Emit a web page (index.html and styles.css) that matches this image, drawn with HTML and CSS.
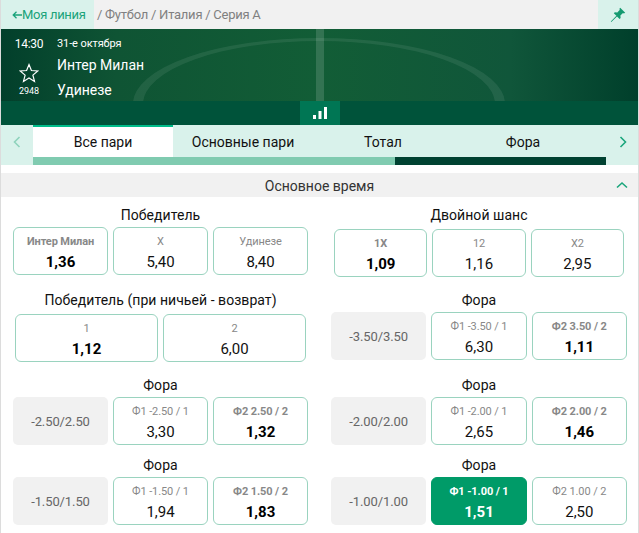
FILE: index.html
```html
<!DOCTYPE html>
<html lang="ru">
<head>
<meta charset="utf-8">
<title>Интер Милан - Удинезе</title>
<link rel="stylesheet" href="styles.css">
</head>
<body>
<div class="page">
  <header class="topbar">
    <a class="back"><svg class="back-arrow" width="10" height="8" viewBox="0 0 10 8"><path d="M10 4H1.500M4.500 .8 1.200 4l3.300 3.200" fill="none" stroke="#1aa37a" stroke-width="1.300"/></svg>Моя линия</a>
    <div class="crumbs">/ Футбол / Италия / Серия А</div>
    <button class="pin" aria-label="Закрепить">
      <svg width="16" height="16" viewBox="0 0 16 16"><path d="M10.2 0.8 15.2 5.8 13.9 6.6 13 5.9 10.4 8.5 10.6 11 9.6 12 7 9.4 1.3 15 0.8 14.6 6.4 8.8 3.8 6.2 4.8 5.2 7.3 5.4 9.9 2.8 9.3 2z" fill="#159a70"/></svg>
    </button>
  </header>

  <section class="banner">
    <svg class="field" width="637" height="72" viewBox="0 0 637 72">
      <path d="M132 75A186 66 0 0 1 504 75H494A176 63 0 0 0 142 75Z" fill="#fff" fill-opacity=".08"/>
      <rect x="315" y="0" width="8" height="72" fill="#fff" fill-opacity=".14"/>
    </svg>
    <div class="fav">
      <div class="time">14:30</div>
      <svg class="star" width="20" height="20" viewBox="0 0 20 20"><path d="M10 1.6 12.4 7.5 18.8 8 13.9 12.1 15.5 18.4 10 15 4.5 18.4 6.1 12.1 1.200 8 7.600 7.500Z" fill="none" stroke="#fff" stroke-width="1.200"/></svg>
      <div class="count">2948</div>
    </div>
    <div class="match">
      <div class="date">31-е октября</div>
      <div class="team">Интер Милан</div>
      <div class="team">Удинезе</div>
    </div>
  </section>

  <div class="statbar">
    <div class="stat-btn">
      <svg width="16" height="16" viewBox="0 0 16 16"><rect x="1" y="10" width="3" height="4" fill="#fff"/><rect x="6.500" y="6" width="3" height="8" fill="#fff"/><rect x="12" y="2" width="3" height="12" fill="#fff"/></svg>
    </div>
  </div>

  <nav class="tabs">
    <div class="tab-arrow tab-arrow-left">
      <svg width="8" height="12" viewBox="0 0 8 12"><path d="M6.500 1 1.500 6l5 5" fill="none" stroke="#8fd3bc" stroke-width="1.600"/></svg>
    </div>
    <div class="tab-main">
      <div class="tab-row">
        <div class="tab tab-active">Все пари</div>
        <div class="tab">Основные пари</div>
        <div class="tab">Тотал</div>
        <div class="tab">Фора</div>
      </div>
      <div class="tab-progress"><div class="tab-progress-fill"></div></div>
    </div>
    <div class="tab-arrow tab-arrow-right">
      <svg width="8" height="12" viewBox="0 0 8 12"><path d="M1.500 1l5 5-5 5" fill="none" stroke="#1ba67c" stroke-width="1.600"/></svg>
    </div>
  </nav>

  <div class="section-head">
    <span>Основное время</span>
    <svg class="section-chevron" width="12" height="8" viewBox="0 0 12 8"><path d="M1 6.500 6 2l5 4.500" fill="none" stroke="#1ba67c" stroke-width="1.600"/></svg>
  </div>

  <main class="markets">
    <section class="market market-l market-spaced">
      <h3 class="market-title">Победитель</h3>
      <div class="odds">
        <div class="odd"><span class="odd-label odd-bold">Интер Милан</span><span class="odd-val odd-bold-val">1,36</span></div>
        <div class="odd"><span class="odd-label">X</span><span class="odd-val">5,40</span></div>
        <div class="odd"><span class="odd-label">Удинезе</span><span class="odd-val">8,40</span></div>
      </div>
    </section>
    <section class="market market-r-narrow market-spaced">
      <h3 class="market-title market-title-tall">Двойной шанс</h3>
      <div class="odds">
        <div class="odd"><span class="odd-label odd-bold">1X</span><span class="odd-val odd-bold-val">1,09</span></div>
        <div class="odd"><span class="odd-label">12</span><span class="odd-val">1,16</span></div>
        <div class="odd"><span class="odd-label">X2</span><span class="odd-val">2,95</span></div>
      </div>
    </section>

    <section class="market market-l-narrow market-spaced">
      <h3 class="market-title market-title-mid">Победитель (при ничьей - возврат)</h3>
      <div class="odds odds-wide">
        <div class="odd"><span class="odd-label">1</span><span class="odd-val odd-bold-val">1,12</span></div>
        <div class="odd"><span class="odd-label">2</span><span class="odd-val">6,00</span></div>
      </div>
    </section>
    <section class="market market-r market-spaced">
      <h3 class="market-title">Фора</h3>
      <div class="odds">
        <div class="line">-3.50/3.50</div>
        <div class="odd"><span class="odd-label">Ф1 -3.50 / 1</span><span class="odd-val">6,30</span></div>
        <div class="odd"><span class="odd-label odd-bold">Ф2 3.50 / 2</span><span class="odd-val odd-bold-val">1,11</span></div>
      </div>
    </section>

    <section class="market market-l">
      <h3 class="market-title">Фора</h3>
      <div class="odds">
        <div class="line">-2.50/2.50</div>
        <div class="odd"><span class="odd-label">Ф1 -2.50 / 1</span><span class="odd-val">3,30</span></div>
        <div class="odd"><span class="odd-label odd-bold">Ф2 2.50 / 2</span><span class="odd-val odd-bold-val">1,32</span></div>
      </div>
    </section>
    <section class="market market-r">
      <h3 class="market-title">Фора</h3>
      <div class="odds">
        <div class="line">-2.00/2.00</div>
        <div class="odd"><span class="odd-label">Ф1 -2.00 / 1</span><span class="odd-val">2,65</span></div>
        <div class="odd"><span class="odd-label odd-bold">Ф2 2.00 / 2</span><span class="odd-val odd-bold-val">1,46</span></div>
      </div>
    </section>

    <section class="market market-l">
      <h3 class="market-title">Фора</h3>
      <div class="odds">
        <div class="line">-1.50/1.50</div>
        <div class="odd"><span class="odd-label">Ф1 -1.50 / 1</span><span class="odd-val">1,94</span></div>
        <div class="odd"><span class="odd-label odd-bold">Ф2 1.50 / 2</span><span class="odd-val odd-bold-val">1,83</span></div>
      </div>
    </section>
    <section class="market market-r">
      <h3 class="market-title">Фора</h3>
      <div class="odds">
        <div class="line">-1.00/1.00</div>
        <div class="odd odd-selected"><span class="odd-label odd-bold">Ф1 -1.00 / 1</span><span class="odd-val odd-bold-val">1,51</span></div>
        <div class="odd"><span class="odd-label">Ф2 1.00 / 2</span><span class="odd-val">2,50</span></div>
      </div>
    </section>
  </main>
</div>
</body>
</html>
```
FILE: styles.css
```css
* { box-sizing: border-box; }
html, body { margin: 0; padding: 0; background: #fff; }
body { font-family: Roboto, "Noto Sans", sans-serif; color: #000; overflow: hidden; }
.page { width: 639px; height: 533px; border-left: 1px solid #dcdcdc; border-right: 1px solid #dcdcdc; overflow: hidden; }

.topbar { display: flex; align-items: stretch; height: 29px; background: #f1f1f1; }
.back { width: 93px; display: flex; align-items: center; padding-left: 11px; background: #d9f2eb; color: #1aa37a; font-size: 13px; letter-spacing: -0.3px; white-space: nowrap; }
.back-arrow { flex: none; margin-right: 0; }
.crumbs { flex: 1; display: flex; align-items: center; padding-left: 3px; color: #808080; font-size: 13px; letter-spacing: -0.25px; white-space: nowrap; }
.pin { width: 40px; border: 0; padding: 0; background: #d9f2eb; display: flex; align-items: center; justify-content: center; }

.banner { position: relative; display: flex; height: 72px; color: #fff; overflow: hidden;
  background: linear-gradient(90deg, #023f2b 0%, #0f5434 18%, #125d36 50%, #10563a 80%, #003f2b 100%); }
.field { position: absolute; left: 0; top: 0; }
.fav { position: relative; width: 56px; display: flex; flex-direction: column; align-items: center; padding: 8px 0 0 0; }
.time { font-size: 12px; line-height: 14px; height: 26px; letter-spacing: -0.3px; }
.star { display: block; }
.count { font-size: 9px; line-height: 12px; margin-top: 2px; }
.match { position: relative; padding-top: 8px; }
.date { font-size: 11px; line-height: 14px; letter-spacing: -0.1px; }
.team { font-size: 14px; line-height: 25px; }
.team:nth-child(2) { margin-top: 2px; }

.statbar { height: 24px; background: #00533a; display: flex; justify-content: center; }
.stat-btn { width: 40px; background: #007654; display: flex; align-items: center; justify-content: center; margin-left: 1px; }

.tabs { display: flex; height: 40px; }
.tab-arrow { width: 32px; flex: none; background: #d9f2eb; display: flex; align-items: center; justify-content: center; padding-bottom: 6px; }
.tab-arrow-right { padding-left: 1px; }
.tab-main { flex: 1; min-width: 0; display: flex; flex-direction: column; }
.tab-row { height: 32px; display: flex; background: #d9f2eb; border-left: 1px solid #9fd8c5; border-right: 1px solid #9fd8c5; margin-right: -1px; }
.tab { width: 140px; display: flex; align-items: center; justify-content: center; font-size: 14px; padding-top: 2px; color: #111; }
.tab-active { margin-left: -1px; background: #fff; border-top: 2px solid #00bd8a; padding-top: 0; }
.tab-progress { height: 8px; background: #004231; }
.tab-progress-fill { width: 362px; height: 100%; background: #80cbb0; }

.section-head { position: relative; margin-top: 8px; height: 24px; background: #f1f1f1; display: flex; align-items: center; justify-content: center; font-size: 14px; color: #333; padding-top: 1px; }
.section-chevron { position: absolute; right: 10px; top: 8px; }

.markets { display: grid; grid-template-columns: 319px 318px; row-gap: 8px; padding-top: 6px; }
.market-l { padding: 0 12px; }
.market-l-narrow { padding: 0 14px; }
.market-r { padding: 0 11px; }
.market-r-narrow { padding: 0 14px; }
.market.market-spaced { padding-bottom: 3px; }
.market-title { margin: 0; height: 24px; line-height: 24px; font-size: 14px; font-weight: 400; text-align: center; color: #111; letter-spacing: 0.05px; white-space: nowrap; }
.market-title-tall { height: 26px; }
.market-title-mid { height: 26px; }
.odds { display: grid; grid-template-columns: repeat(3, 1fr); column-gap: 5px; height: 48px; }
.odds-wide { grid-template-columns: repeat(2, 1fr); }
.odd { border: 1px solid #9ad3bf; border-radius: 6px; display: flex; flex-direction: column; align-items: center; background: #fff; padding-top: 6px; }
.odd-label { font-size: 11px; line-height: 16px; color: #888; letter-spacing: -0.1px; }
.odd-bold { font-weight: 700; }
.odd-val { font-size: 15px; line-height: 22px; margin-top: 1px; color: #111; }
.odd-bold-val { font-weight: 700; color: #000; }
.line { background: #f1f1f1; border-radius: 5px; display: flex; align-items: center; justify-content: center; font-size: 13px; color: #666; letter-spacing: -0.1px; }
.odd-selected { background: #009b68; border-color: #009b68; }
.odd-selected .odd-label, .odd-selected .odd-val { color: #fff; }
```
